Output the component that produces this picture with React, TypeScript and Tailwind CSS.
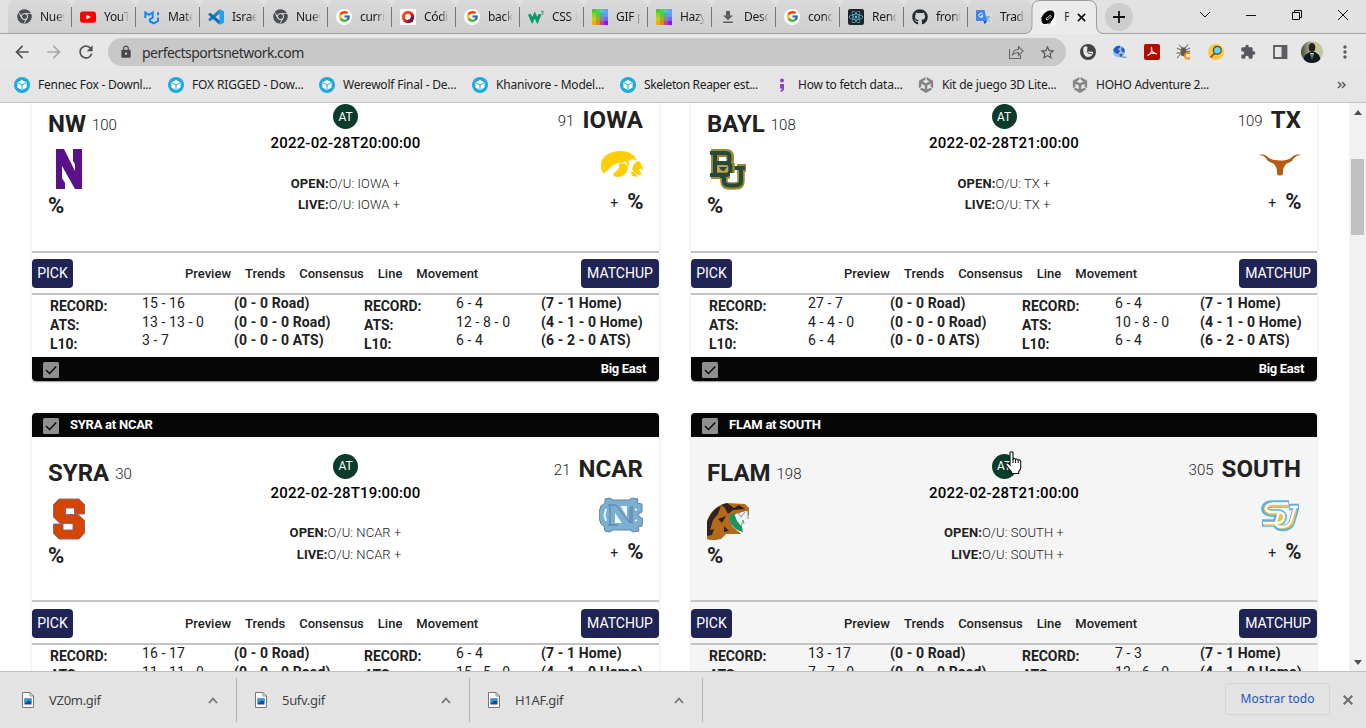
import React from "react";
import { FaChrome, FaGithub, FaReact } from "react-icons/fa";
import { FcGoogle } from "react-icons/fc";
import { SiUnity } from "react-icons/si";
import { MdLock, MdStarBorder, MdRefresh, MdArrowBack, MdArrowForward, MdMoreVert, MdExtension } from "react-icons/md";

const Chrome = () => <FaChrome className="size-[15px] text-[#4a4d51]" />;

const Google = () => (
  <div className="flex size-4 items-center justify-center rounded-full bg-white">
    <FcGoogle className="size-[13px]" />
  </div>
);

const Youtube = () => (
  <svg viewBox="0 0 16 16" className="size-4">
    <rect x="0" y="2.4" width="16" height="11.4" rx="2.8" fill="#f00" />
    <path d="M6.4 5.6v5l4.3-2.5z" fill="#fff" />
  </svg>
);

const Mui = () => (
  <svg viewBox="0 0 16 16" className="size-4" fill="none" stroke="#1283ff" strokeWidth="2">
    <path d="M1.3 9V3.6L5 5.9l3.7-2.3V8.500L5.800 10.300v2l4 2.100 4.200-2.400V8.500" />
    <path d="M14 3.200v3" />
  </svg>
);

const VsCode = () => (
  <svg viewBox="0 0 16 16" className="size-4">
    <path d="M11.500.3 12 4.300 2.400 12.200.5 11.300V10z" fill="#1483ca" />
    <path d="M11.500 15.700 12 11.700 2.400 3.800.5 4.700V6z" fill="#0a6fb5" />
    <path d="M11.500.3 16 2.300v11.400l-4.500 2z" fill="#24a1ec" />
  </svg>
);

const Platzi = () => (
  <svg viewBox="0 0 16 16" className="size-4">
    <defs>
      <linearGradient id="ring" x1="0" x2="1" y1="0" y2="1">
        <stop offset="0.3" stopColor="#fb4a22" />
        <stop offset="0.75" stopColor="#a01838" />
        <stop offset="1" stopColor="#47102f" />
      </linearGradient>
    </defs>
    <rect width="16" height="16" fill="#fff" />
    <circle cx="8" cy="8" r="4.600" fill="none" stroke="url(#ring)" strokeWidth="3.200" />
    <path d="M8 8h5v5.500L8 11z" fill="#7c1233" />
    <circle cx="8" cy="8" r="2.600" fill="#fff" />
  </svg>
);

const W3 = () => (
  <svg viewBox="0 0 17 16" className="h-4 w-[17px] shrink-0" fill="none" stroke="#0a9b66">
    <path d="M1.300 5.200 4.200 11.500 6.800 6l2.600 5.500L12 5.200" strokeWidth="3" />
    <path d="M13.200 2.300h2.200L14.100 3.600c2 0 1.600 2.200-1 1.700" strokeWidth="0.900" />
  </svg>
);

const palette = [
  "#4fd018", "#35d86a", "#48c9cf", "#5ba6ff",
  "#8ed414", "#5fbf50", "#57a5a0", "#7590ff",
  "#d1c80d", "#a9a52c", "#8d829a", "#7f61f2",
  "#e8b500", "#d08a26", "#b5489e", "#8a13ee",
];
const Mosaic = () => (
  <svg viewBox="0 0 16 16" className="size-4" shapeRendering="crispEdges">
    {palette.map((c, i) => (
      <rect key={i} x={(i % 4) * 4} y={Math.floor(i / 4) * 4} width="4" height="4" fill={c} />
    ))}
  </svg>
);

const Download = () => (
  <svg viewBox="0 0 16 16" className="size-4" fill="#5b5e62">
    <path d="M6 2h4v4.500h3L8 11.300 3 6.500h3zM3 12.500h10v1.600H3z" />
  </svg>
);

const ReactFav = () => (
  <div className="flex size-4 items-center justify-center rounded-[2px] bg-[#20232a]">
    <FaReact className="size-[14px] text-[#58c4dc]" />
  </div>
);

const Translate = () => (
  <svg viewBox="0 0 16 16" className="size-4">
    <path d="M6.500 4H15q1 0 1 1v9q0 1-1 1H9z" fill="#d5dade" />
    <path d="M9.500 8h5M12 6.800V8c0 2-1.200 3.200-2 4M11 9.500c.8 1.500 2 2.500 3 3" stroke="#6b93a6" fill="none" strokeWidth=".9" />
    <path d="M1 1h7.500l2.700 11H1q-1 0-1-1V2q0-1 1-1z" fill="#4285f4" />
    <path d="M7.500 12h3.700L8.600 15.500z" fill="#2455bd" />
    <path d="M6.800 5.200A2 2 0 1 0 7 6.900H5.200" stroke="#fff" fill="none" strokeWidth="1" />
  </svg>
);

const Football = () => (
  <svg viewBox="0 0 16 16" className="size-4">
    <rect x=".5" y=".5" width="15" height="15" fill="#fff" />
    <path d="M2 13.500C.3 10 2.500 5 6 3s7-2 8 .3 0 7-3.500 9.600S3.500 15.800 2 13.500z" fill="#060606" />
    <path d="m6 9.800 4.200-3.600 1 1.400L7 11.200z" fill="none" stroke="#fff" strokeWidth=".8" />
    <path d="M1 9.500 3 7M8 15l3-1.500" stroke="#060606" strokeWidth=".7" />
  </svg>
);

const tabs: [React.FC, string][] = [
  [Chrome, "Nueva"], [Youtube, "YouTu"], [Mui, "Mater"], [VsCode, "Israel"], [Chrome, "Nueva"],
  [Google, "curric"], [Platzi, "Códig"], [Google, "back"], [W3, "CSS L"], [Mosaic, "GIF p"],
  [Mosaic, "Hazy"], [Download, "Desca"], [Google, "cond"], [ReactFav, "Rend"],
  [() => <FaGithub className="size-4 text-[#24292e]" />, "fronte"], [Translate, "Tradu"],
];

const TabStrip = () => (
  <div className="flex h-[34px] shrink-0 border-b border-[#a1a1a1] bg-[#e2e2e2] pl-2">
    {tabs.map(([Icon, title], i) => (
      <div key={i} className="relative flex w-16 shrink-0 items-center rounded-t-lg bg-linear-to-b from-[#d9d9d9] to-[#cfcfcf] pl-2">
        <div className="flex w-4 shrink-0 justify-center"><Icon /></div>
        <div className="ml-2 w-[25px] overflow-hidden whitespace-nowrap text-[12px] tracking-[-0.3px] text-[#1a1a1a] mask-r-from-65% mask-r-to-100%">{title}</div>
        {i < 15 && <div className="absolute right-0 top-[7px] h-5 w-px bg-[#777]" />}
      </div>
    ))}
    <div className="relative z-10 flex h-[34px] w-[66px] shrink-0 items-center pl-2">
      <svg viewBox="0 0 80 34" className="absolute -left-2 top-0 h-[34px] w-20">
        <path d="M0 33.500Q8 33.500 8 25.500V8.500Q8 .5 16 .5H64.500Q72.500 .5 72.500 8.500V25.500Q72.500 33.500 80 33.500V34H0z" fill="#ebebeb" />
        <path d="M0 33.500Q8 33.500 8 25.500V8.500Q8 .5 16 .5H64.500Q72.500 .5 72.500 8.500V25.500Q72.500 33.500 80 33.500" fill="none" stroke="#9b9b9b" />
      </svg>
      <div className="relative"><Football /></div>
      <div className="relative ml-2 w-[5px] overflow-hidden text-[12px] text-[#333]">P</div>
      <svg viewBox="0 0 10 10" className="relative ml-2 size-[9px]" stroke="#111" strokeWidth="1.900"><path d="M1 1l8 8M9 1 1 9" /></svg>
    </div>
    <div className="ml-[7px] mt-[3px] flex size-7 items-center justify-center rounded-full bg-[#cdcdcd]">
      <svg viewBox="0 0 12 12" className="size-3" stroke="#111" strokeWidth="1.800"><path d="M6 0v12M0 6h12" /></svg>
    </div>
    <div className="ml-auto mr-[17px] flex h-[29px] items-center gap-[34px]">
      <svg viewBox="0 0 12 12" className="size-3" fill="none" stroke="#111" strokeWidth="1"><path d="M1 3l5 5 5-5" /></svg>
      <svg viewBox="0 0 12 12" className="size-3" fill="none" stroke="#111"><path d="M1 6.500h10" /></svg>
      <svg viewBox="0 0 12 12" className="size-3" fill="none" stroke="#111"><path d="M1.500 3.500h7v7h-7zM3.500 3.500v-2h7v7h-2" /></svg>
      <svg viewBox="0 0 12 12" className="size-3" fill="none" stroke="#111"><path d="M1 1l10 10M11 1 1 11" /></svg>
    </div>
  </div>
);

const Extensions = () => (
  <div className="flex items-center gap-4">
    <svg viewBox="0 0 16 16" className="size-4"><circle cx="8" cy="8" r="8" fill="#414347" /><path d="M3.300 4.500C3.500 2 6 1.500 7.500 3L7 7.500l6 .3c.5 3-2 5.200-5 5.200-3.500-.3-5.300-4-4.700-8.500z" fill="#e8e8e8" /><path d="M7 7.500c1 2 3 2.500 5 2" stroke="#414347" fill="none" /></svg>
    <svg viewBox="0 0 16 16" className="size-4"><circle cx="7" cy="7.500" r="6" fill="#9abbe4" /><path d="M4 2.500c3-1 5-1 4 1L6 5l2 2-2 3C3 9 1.500 8 1.300 5.500zM9.500 3l3 2v4l-3-2zM7 10.500l4-1-2 4z" fill="#1f5cc2" /><path d="M9 12.800 14.500 13.500" stroke="#7c9cc8" strokeWidth="1.500" /></svg>
    <svg viewBox="0 0 16 16" className="size-4"><rect width="16" height="16" rx="2" fill="#b50b00" /><path d="M3.500 11.500C6 10.500 9 7 7.500 3.800 6.500 5.500 9 9.500 12.800 9.800 10 8.500 6 9.500 3.500 11.500z" fill="none" stroke="#fff" strokeWidth="1.200" /></svg>
    <svg viewBox="0 0 16 16" className="size-4" fill="none" stroke="#5a5550"><path d="M3 .5 6 4M12 .5 9 4M1 4l4 2M14 4l-4 2M.5 9H5M1 14l3.500-4M14 7l-4 1" /><ellipse cx="7.500" cy="7.800" rx="3" ry="4.500" fill="#5f5953" stroke="none" /><path d="M14 9.700c-2-2-5-.8-5 2s3 3.800 5 2" stroke="#ff8a00" strokeWidth="1.900" /></svg>
    <svg viewBox="0 0 16 16" className="size-4"><circle cx="8" cy="8" r="8" fill="#fdc93a" /><path d="M6.500 9.500 2.500 13.500" stroke="#b8502b" strokeWidth="2.200" /><circle cx="9.300" cy="6.300" r="3.900" fill="#6bd5ec" stroke="#3d4856" strokeWidth="1.300" /></svg>
    <MdExtension className="size-4 text-[#55585c]" />
    <svg viewBox="0 0 16 16" className="size-4"><path d="M2 2h12.500v12H2z" fill="none" stroke="#5a5d61" strokeWidth="1.800" /><path d="M9.500 1.500h5v13h-5z" fill="#5a5d61" /></svg>
    <svg viewBox="0 0 22 22" className="-ml-[3px] size-[22px]">
      <defs>
        <clipPath id="av"><circle cx="11" cy="11" r="11" /></clipPath>
        <linearGradient id="avg" x2="1"><stop stopColor="#3b4a3c" /><stop offset=".5" stopColor="#c9cca0" /><stop offset="1" stopColor="#c5c49a" /></linearGradient>
      </defs>
      <g clipPath="url(#av)"><rect width="22" height="22" fill="url(#avg)" /><path d="M1 22 4 14l5-3h5l4 3 3 8z" fill="#101a20" /><ellipse cx="11" cy="6.500" rx="3.300" ry="4.500" fill="#27221d" /><path d="m9 12 2 7 2-7z" fill="#c7d0cf" /><path d="M11 13v6" stroke="#182226" /></g>
    </svg>
    <MdMoreVert className="-mx-[4px] size-5 text-[#5a5d61]" />
  </div>
);

const Toolbar = () => (
  <div className="flex h-9 shrink-0 items-center bg-[#e7e7e7] pl-3">
    <MdArrowBack className="size-5 text-[#4f5256]" />
    <MdArrowForward className="ml-3 size-5 text-[#a9a9a9]" />
    <MdRefresh className="ml-3 size-5 text-[#4f5256]" />
    <div className="ml-3 flex h-7 w-[958px] shrink-0 items-center rounded-full bg-[#c8c8c8] pl-[11px] pr-[10px]">
      <MdLock className="size-[14px] text-[#46494d]" />
      <div className="ml-[9px] text-[14px] tracking-[-0.53px] text-[#303134]">perfectsportsnetwork.com</div>
      <svg viewBox="0 0 16 16" className="ml-auto size-4" fill="none" stroke="#65686b" strokeWidth="1.100"><path d="M1.500 5v9.500h11V11M4.500 11c.4-3.700 2.500-5.500 6-5.500V2.500l4.500 4.500-4.500 4.500V8.500c-2.800 0-4.500.8-6 2.500z" /></svg>
      <MdStarBorder className="ml-[15px] size-[17px] text-[#55585c]" />
    </div>
    <div className="ml-[14px]"><Extensions /></div>
  </div>
);

const Cube = () => (
  <svg viewBox="0 0 16 16" className="size-4"><circle cx="8" cy="8" r="8" fill="#21a9df" /><path d="M8 3l4.600 2.400v5L8 13l-4.600-2.600v-5z" fill="#fff" /><path d="M4 5.800 8 8l4-2.200M8 8v4.500" stroke="#21a9df" strokeWidth="1" fill="none" /></svg>
);
const Semi = () => (
  <svg viewBox="0 0 16 16" className="size-4" fill="#8e3fc2"><circle cx="8" cy="3.600" r="2" /><path d="M6 7h4v4.500c0 2-1.300 3.200-3.500 3.500v-1.500c1-.3 1.400-1 1.300-2H6z" /></svg>
);
const Unity = () => <SiUnity className="size-4 text-[#858585]" />;

const bookmarks: [React.FC, string, string][] = [
  [Cube, "Fennec Fox - Downl...", "w-[154px] tracking-[-0.25px]"],
  [Cube, "FOX RIGGED - Dow...", "w-[151px] tracking-[-0.15px]"],
  [Cube, "Werewolf Final - De...", "w-[153px] tracking-[-0.2px]"],
  [Cube, "Khanivore - Model...", "w-[148px] tracking-[-0.2px]"],
  [Cube, "Skeleton Reaper est...", "w-[154px] tracking-[-0.35px]"],
  [Semi, "How to fetch data...", "w-[144px] tracking-[-0.25px]"],
  [Unity, "Kit de juego 3D Lite...", "w-[154px] tracking-[-0.2px]"],
  [Unity, "HOHO Adventure 2...", "w-[154px] tracking-[-0.25px]"],
];

const Bookmarks = () => (
  <div className="flex h-[33px] shrink-0 items-center border-b border-[#c3c3c3] bg-[#e5e5e5] pb-[3px] pl-[14px] text-[12px] text-[#1d1d1d]">
    {bookmarks.map(([Icon, label, cls]) => (
      <div key={label} className={`flex shrink-0 items-center gap-2 whitespace-nowrap ${cls}`}>
        <Icon />{label}
      </div>
    ))}
    <svg viewBox="0 0 10 8" className="ml-auto mr-[19px] h-2 w-[10px]" fill="none" stroke="#606060" strokeWidth="1.600"><path d="M1 1l3 3-3 3M5 1l3 3-3 3" /></svg>
  </div>
);

const Northwestern = () => (
  <svg viewBox="0 0 42 42" className="size-[42px]"><path d="M8 1h8l11 22V16l-2-3V1h9v40h-7L14 18v12l3 5v6H8z" fill="#5b1189" /></svg>
);
const Iowa = () => (
  <svg viewBox="0 0 42 42" className="size-[42px]"><path d="M3 30C-3 22 0 13 9 9c8-3.500 18-2.500 23 2 2 2 3 4 4 6-3-2-5-2-7-1l-2 2 2 3-2 1-3-5-4 2c-6 0-10 3-13 7-2 1-3 2-4 4z" fill="#ffcd00" /><path d="M18 20c4-2 8 0 9 3-1 6-4 10-10 10-5 0-6-3-3-5 3-2 5-4 4-8zM31 25c1-4 3-7 6-8 3 1 5 6 5 10-2-3-3-3-4-1 0 1 2 2 3 4l-3 1c-3-1-6-3-7-6zM30 27c3 1 5 3 7 6l-6-1z" fill="#ffcd00" /></svg>
);
const Baylor = () => (
  <svg viewBox="0 0 42 42" className="size-[42px]">
    <g fill="none" stroke="#9f8634" strokeWidth="8"><path d="M4 5h15q4 0 4 4v3q0 3-3 3 4 0 4 4v3q0 5-5 5H4M8 5v22M20 21h6M30 20h9" /><path d="M17 26v7q0 5 6 5h5q6 0 6-5V21" strokeWidth="7.500" /></g>
    <rect x="10" y="16" width="11" height="8" fill="#b9a256" />
    <g fill="none" stroke="#234b38" strokeWidth="4"><path d="M3 5h16q3.500 0 3.500 4v2q0 4-4 4h-9 9q5 0 5 4v3q0 5-5 5H3M8 5v22" /><path d="M13 28h6M17 28v5q0 4.500 6 4.500h5q6 0 6-4.500V21M28 20h10" /></g>
    <path d="m12 19 2 3 3 1 3-4z" fill="#234b38" />
    <rect x="23" y="25" width="6" height="9" fill="#fff" />
  </svg>
);
const Texas = () => (
  <svg viewBox="0 0 42 42" className="size-[42px]"><path d="M0 11c5-1.500 8 1 10 3 3 2 6 2.500 11 2.500s8-.5 11-2.500c2-2 5-4.500 10-3-5 0-7 3-9 6l-6 3-2 3c-1 2-1 4-1 7-1 2-5 2-6 0 0-3 0-5-1-7l-2-3-6-3C7 14 5 11 0 11z" fill="#b75a12" /></svg>
);
const Syracuse = () => (
  <svg viewBox="0 0 42 42" className="size-[42px]"><path d="M11 1h20l5.500 5.500V16H26.500V10h-9v6.500H30l6.500 6V35L31 41H11L5.500 35.500V26h9.500v6h10v-6.500H12L5.500 19V6.500z" fill="#d44500" stroke="#8b667c" strokeWidth="1" /></svg>
);
const Carolina = () => (
  <svg viewBox="0 0 44 42" className="h-[42px] w-11">
    <path d="M6 5l5-1 3 2h16l3-2 6 1-1 4 5 1v8l-4 2 1 2 4 3-1 7-4 1 1 4-6 1-3-2H14l-3 2-5-1-1-5-3-2-2-6v-6l2-6 4-3z" fill="#7bafd4" stroke="#66809a" strokeWidth="1" />
    <path d="M16 19v10h7zM21.500 12H28v11z" fill="#f4f8fb" />
    <path d="M7 15l-1.500 6L7 27M36 15l2 1M36 27l2-1" fill="none" stroke="#f4f8fb" strokeWidth="1.800" />
    <path d="M9 11h8l14 18V13M11 11v20M33 12v18M13 31h6M9 31h5" fill="none" stroke="#587792" strokeWidth=".9" />
  </svg>
);
const Florida = () => (
  <svg viewBox="0 0 42 42" className="size-[42px]"><path d="M0 38V23C4 12 11 7 20 5l18 1 4 4v8l-3-5-10 3-6 4 2 8 9 8H19l-5 5c-4 1-9 2-14 0z" fill="#b56a1b" /><path d="M0 24C4 14 8 10 14 8l-3 8-5 6-3 10 4-1-2 6-5 1zM20 5l7 5 5-3 6 4-12 1-5 4-3-6-4-3zM11 21l8-3-4 7zM17 28l5 5-5 1z" fill="#30231b" /><path d="M22 18l5-3 3 8 5 6 1 5c-5-1-9-4-12-8z" fill="#169658" /><path d="M29 16l12-3v6l-4 9-4-3z" fill="#eef4f4" /><path d="M41 11v10M31 15l3 4 4-5M34 29l2-7 1 4" stroke="#5e7e83" strokeWidth=".8" fill="none" /></svg>
);
const Southern = () => (
  <svg viewBox="0 0 42 42" className="size-[42px]">
    <g fill="none" stroke="#5eb1df" strokeWidth="7.500"><path d="M30 10H14Q7 10 6 14t6 5h8q5 1 4 5t-6 5H3" /><path d="m20 17-3 11q-1 6 7 6 7 0 9-6l4-14M30 13h10" strokeWidth="6.500" /></g>
    <g fill="none" stroke="#f5bd4e" strokeWidth="4"><path d="M30 11H14Q8 11 7 14t5 5h8q5 1 4 5t-6 6H5" /><path d="m22 18-3 10q-1 5 5 5 7 0 9-5l3-13" /></g>
    <g fill="none" stroke="#fff" strokeWidth="2.300"><path d="M29 9.500H14Q8 10 7 13.500t5 4.500h8q6 1 5 6t-7 5H4" /><path d="m20 18-3 10q-1 5 6 5 7 0 9-6l4-13M31 13h8" /></g>
  </svg>
);

type Stat = [string, string, string, string];
interface Game {
  away: string; awayNo: string; home: string; homeNo: string; time: string;
  AwayLogo: React.FC; HomeLogo: React.FC; stats: Stat[]; hovered?: boolean; wide?: boolean;
}

const games: Game[] = [
  { away: "NW", awayNo: "100", home: "IOWA", homeNo: "91", time: "2022-02-28T20:00:00", AwayLogo: Northwestern, HomeLogo: Iowa,
    stats: [["15 - 16", "(0 - 0 Road)", "6 - 4", "(7 - 1 Home)"], ["13 - 13 - 0", "(0 - 0 - 0 Road)", "12 - 8 - 0", "(4 - 1 - 0 Home)"], ["3 - 7", "(0 - 0 - 0 ATS)", "6 - 4", "(6 - 2 - 0 ATS)"]] },
  { away: "BAYL", awayNo: "108", home: "TX", homeNo: "109", time: "2022-02-28T21:00:00", AwayLogo: Baylor, HomeLogo: Texas, wide: true,
    stats: [["27 - 7", "(0 - 0 Road)", "6 - 4", "(7 - 1 Home)"], ["4 - 4 - 0", "(0 - 0 - 0 Road)", "10 - 8 - 0", "(4 - 1 - 0 Home)"], ["6 - 4", "(0 - 0 - 0 ATS)", "6 - 4", "(6 - 2 - 0 ATS)"]] },
  { away: "SYRA", awayNo: "30", home: "NCAR", homeNo: "21", time: "2022-02-28T19:00:00", AwayLogo: Syracuse, HomeLogo: Carolina,
    stats: [["16 - 17", "(0 - 0 Road)", "6 - 4", "(7 - 1 Home)"], ["11 - 11 - 0", "(0 - 0 - 0 Road)", "15 - 5 - 0", "(4 - 1 - 0 Home)"], ["4 - 6", "(0 - 0 - 0 ATS)", "6 - 4", "(6 - 2 - 0 ATS)"]] },
  { away: "FLAM", awayNo: "198", home: "SOUTH", homeNo: "305", time: "2022-02-28T21:00:00", AwayLogo: Florida, HomeLogo: Southern, hovered: true, wide: true,
    stats: [["13 - 17", "(0 - 0 Road)", "7 - 3", "(7 - 1 Home)"], ["7 - 7 - 0", "(0 - 0 - 0 Road)", "12 - 6 - 0", "(4 - 1 - 0 Home)"], ["5 - 5", "(0 - 0 - 0 ATS)", "6 - 4", "(6 - 2 - 0 ATS)"]] },
];

const Check = () => (
  <svg viewBox="0 0 16 16" className="size-4"><rect width="16" height="16" rx="1.500" fill="#8f8f8f" /><path d="M3 8l3.500 3.500L13.300 4.500" fill="none" stroke="#080808" strokeWidth="1.400" /></svg>
);

const Labels = () => (
  <div className="pt-[2px] text-[14px] font-bold leading-[19px] tracking-[-0.05px]">
    <div>RECORD:</div><div>ATS:</div><div>L10:</div>
  </div>
);

const Column = ({ rows, bold }: { rows: string[]; bold?: boolean }) => (
  <div className={`-mt-px whitespace-nowrap text-[14px] leading-[18.700px] ${bold ? "font-bold tracking-[0.12px]" : "tracking-[0.1px]"}`}>
    {rows.map((r, i) => <div key={i}>{r}</div>)}
  </div>
);

const Card = ({ g }: { g: Game }) => (
  <div className={`overflow-hidden rounded shadow-[0_2px_1px_-1px_rgba(0,0,0,.2),0_1px_1px_rgba(0,0,0,.14),0_1px_3px_rgba(0,0,0,.12)] ${g.hovered ? "bg-[#f5f5f5]" : "bg-white"}`}>
    <div className="flex h-6 items-center bg-[#060606] pl-[11px] text-[13px] font-bold tracking-[-0.25px] text-white">
      <div className="pt-[2px]"><Check /></div><div className="ml-[11px]">{g.away} at {g.home}</div>
    </div>
    <div className="flex h-[163.500px] justify-between px-4">
      <div className="w-[180px] pt-[24.500px]">
        <div className="flex h-[36.500px] items-start whitespace-nowrap leading-6">
          <span className="text-[24px] font-bold">{g.away}</span>
          <span className="ml-[6px] pt-px text-[15px] font-light">{g.awayNo}</span>
        </div>
        <g.AwayLogo />
        <div className="mt-1 text-[22px] font-bold leading-6 tracking-[-0.5px]">%</div>
      </div>
      <div className="flex flex-col items-center pt-[17px]">
        <div className="flex size-[25px] items-center justify-center rounded-full bg-[#0b3b29] text-[12px] text-white">AT</div>
        <div className="mt-[4px] text-[15px] font-medium leading-5 tracking-[0.17px] text-black">{g.time}</div>
        <div className="mt-[19.500px] flex flex-col items-end text-[13px] font-light leading-[21.250px] tracking-[0.08px]">
          <div><b className="font-bold">OPEN:</b>O/U: {g.home} +</div>
          <div><b className="font-bold">LIVE:</b>O/U: {g.home} +</div>
        </div>
      </div>
      <div className="flex w-[180px] flex-col items-end pt-[20.500px]">
        <div className="flex h-[36.500px] items-start whitespace-nowrap leading-6">
          <span className="mr-2 pt-px text-[15px] font-light">{g.homeNo}</span>
          <span className="text-[24px] font-bold tracking-[0.1px]">{g.home}</span>
        </div>
        <g.HomeLogo />
        <div className="mt-[4px] flex leading-6"><span className="mr-[9px] pt-px text-[14px]">+</span><span className="text-[22px] font-bold tracking-[-0.5px]">%</span></div>
      </div>
    </div>
    <div className="flex h-[44.400px] items-center justify-between border-y-2 border-[#c4c4c4] pt-px text-[14px] text-white">
      <div className="flex h-[29px] w-[41px] items-center justify-center rounded bg-[#1f2455]">PICK</div>
      <div className="flex w-[508px] gap-[14px] pl-[112px] pt-px text-[13px] font-medium text-[#212121]">
        <span>Preview</span><span>Trends</span><span>Consensus</span><span>Line</span><span>Movement</span>
      </div>
      <div className="flex h-[29px] w-[78px] items-center justify-center rounded bg-[#1f2455]">MATCHUP</div>
    </div>
    <div className={`grid h-[62px] pl-[18px] ${g.wide ? "grid-cols-[99px_82px_132px_93px_1fr]" : "grid-cols-[92px_92px_130px_92px_1fr]"}`}>
      <Labels />
      <Column rows={g.stats.map((s) => s[0])} />
      <Column rows={g.stats.map((s) => s[1])} bold />
      <Labels />
      <div className="flex">
        <div className="w-[85px] shrink-0"><Column rows={g.stats.map((s) => s[2])} /></div>
        <Column rows={g.stats.map((s) => s[3])} bold />
      </div>
    </div>
    <div className="flex h-6 items-center justify-between bg-[#060606] pl-[11px] pr-[13px] text-[13px] font-bold tracking-[-0.3px] text-white">
      <div className="pt-[2px]"><Check /></div><div>Big East</div>
    </div>
  </div>
);

const FileIcon = () => (
  <svg viewBox="0 0 12 16" className="h-4 w-3"><path d="M.5.5h7.500l3.500 3.500v11.500H.5z" fill="#fafafa" stroke="#777" /><path d="M8 .5V4h3.500" fill="none" stroke="#777" strokeWidth=".8" /><rect x="2.500" y="6.500" width="7" height="6" fill="#174b8c" /><path d="M2.500 6.500h7v3l-3-1-4 3z" fill="#2c9be0" /></svg>
);

const Downloads = () => (
  <div className="flex h-[57px] shrink-0 border-t border-[#bfbfbf] bg-[#e3e3e3] pt-[6px]">
    {["VZ0m.gif", "5ufv.gif", "H1AF.gif"].map((f, i) => (
      <div key={f} className={`flex h-11 items-center border-r border-[#b2b2b2] pr-[18px] ${i === 0 ? "w-[237px] pl-[22px]" : "w-[233px] pl-[18px]"}`}>
        <FileIcon />
        <span className="ml-[15px] pt-px text-[13px] tracking-[-0.3px] text-[#444]">{f}</span>
        <svg viewBox="0 0 10 7" className="ml-auto h-[7px] w-[10px]" fill="none" stroke="#757575" strokeWidth="1.800"><path d="M1 6l4-4.500L9 6" /></svg>
      </div>
    ))}
    <div className="ml-auto mt-[5px] flex h-8 w-[105px] items-center justify-center rounded border border-[#d5d5d5] text-[12px] text-[#1d55bd]">Mostrar todo</div>
    <svg viewBox="0 0 10 10" className="ml-[13px] mr-[13px] mt-[17px] size-[10px]" stroke="#6b6b6b" strokeWidth="2"><path d="M.7.7l8.600 8.600M9.300.7.7 9.300" /></svg>
  </div>
);

const Hand = () => (
  <svg viewBox="0 0 17 24" className="absolute left-[1005px] top-[348px] h-6 w-[17px]"><path d="M5 1.500q1.500-1.500 3 0V8q1.500-1.200 2.600.3 1.600-.8 2.400.7 2.200-.7 2.700 1.500V16q0 3-2 4.500v2H6.500V21L1 14q-.8-2 .7-2.300Q3.500 12 5 14z" fill="#fff" stroke="#111" strokeWidth="1.100" /><path d="M8 8v4M10.600 8.500V12M13.200 9.500V12" stroke="#111" /></svg>
);

export default function App() {
  return (
    <div className="flex h-[728px] w-[1366px] flex-col overflow-hidden bg-white font-['Noto_Sans',sans-serif]">
      <TabStrip />
      <Toolbar />
      <Bookmarks />
      <div className="relative flex h-[568px] shrink-0 overflow-hidden font-[Roboto,sans-serif] text-[#212121]">
        <div className="-mt-[39.950px] ml-8 grid w-[1285px] shrink-0 auto-rows-[317.900px] grid-cols-[627px_626px] gap-8">
          {games.map((g) => <Card key={g.away} g={g} />)}
        </div>
        <div className="ml-auto flex w-[17px] flex-col items-center bg-[#f1f1f1] pb-[6px] pt-[7px]">
          <svg viewBox="0 0 8 5" className="h-[5px] w-2" fill="#505050"><path d="M0 5l4-5 4 5z" /></svg>
          <div className="mt-11 h-[76px] w-[13px] bg-[#c1c1c1]" />
          <svg viewBox="0 0 8 5" className="mt-auto h-[5px] w-2" fill="#505050"><path d="M0 0l4 5 4-5z" /></svg>
        </div>
        <Hand />
      </div>
      <Downloads />
    </div>
  );
}
